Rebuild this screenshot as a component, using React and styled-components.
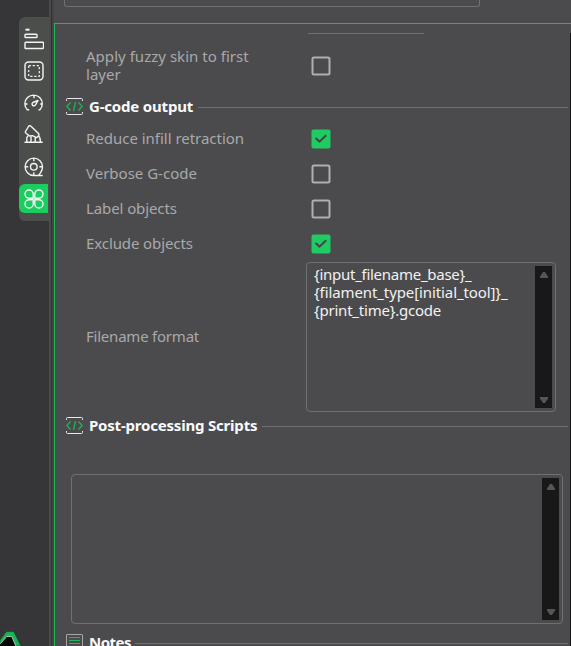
import styled, { createGlobalStyle } from "styled-components";

const GlobalStyle = createGlobalStyle`
  * {
    box-sizing: border-box;
  }

  body {
    margin: 0;
    overflow: hidden;
    background: #4b4b4d;
    font-family: "Noto Sans", "Open Sans", sans-serif;
  }
`;

const Window = styled.div`
  display: flex;
  width: 571px;
  height: 646px;
  overflow: hidden;
  background: #4b4b4d;
`;

const Sidebar = styled.aside`
  display: flex;
  flex-direction: column;
  justify-content: space-between;
  align-items: flex-end;
  width: 49px;
  padding-top: 17px;
  background: #363638;
`;

const TabList = styled.nav`
  width: 30px;
  height: 204px;
  padding-top: 7px;
  border-radius: 6px 0 0 6px;
  background: #4b4e4b;
`;

const Tab = styled.button`
  display: flex;
  align-items: center;
  justify-content: center;
  width: 29px;
  height: ${(props) => (props.$active ? 29 : 32)}px;
  padding: ${(props) => (props.$active ? "0" : "0 0 2px")};
  border: none;
  border-radius: 6px 0 0 6px;
  background: ${(props) => (props.$active ? "#1acd5f" : "transparent")};

  svg {
    display: block;
    margin-left: 1px;
  }
`;

const Logo = styled.svg`
  display: block;
  align-self: flex-start;
`;

const Divider = styled.div`
  width: 5px;
  border-left: 2px solid #4b4b4d;
  background: linear-gradient(to right, #303032 1px, #444446 1px);
`;

const Main = styled.main`
  flex: 1;
  min-width: 0;
`;

const PresetInput = styled.div`
  width: 416px;
  height: 7px;
  margin: 0 0 16px 10px;
  border: 1px solid #707072;
  border-top: none;
  border-radius: 0 0 3px 3px;
`;

const Panel = styled.div`
  position: relative;
  height: 640px;
  padding-top: 9px;
  border-top: 1px solid #1db954;
  border-left: 1px solid #1db954;
`;

const ScrollEdge = styled.div`
  position: absolute;
  top: 9px;
  right: 0;
  bottom: 0;
  width: 1px;
  background: #141414;
`;

const FieldUnderline = styled.div`
  width: 116px;
  height: 1px;
  margin-left: 253px;
  background: #707072;
`;

const Row = styled.div`
  display: flex;
  align-items: center;
  height: ${(props) => props.$height || 34}px;
  margin-bottom: 1px;
  padding-left: 31px;
`;

const Label = styled.span`
  width: 220px;
  padding-bottom: 2px;
  color: #a9a9aa;
  font-size: 15px;
  line-height: 18px;
  letter-spacing: ${(props) => props.$spacing || 0}px;
  white-space: pre-line;
`;

const CheckSvg = styled.svg`
  display: block;
  margin-left: 5px;
`;

const SectionHeader = styled.div`
  display: flex;
  align-items: center;
  height: 17px;
  margin: ${(props) => props.$margin || "0"};
  padding: 0 3px 0 11px;
`;

const SectionTitle = styled.h2`
  margin: 0 5px 2px 6px;
  width: ${(props) => props.$width}px;
  color: #fafafa;
  font-size: 15px;
  font-weight: 700;
  line-height: 18px;
  letter-spacing: ${(props) => props.$spacing || 0}px;
  white-space: nowrap;
`;

const SectionLine = styled.div`
  flex: 1;
  height: 1px;
  margin-top: 2px;
  background: #707072;
`;

const TextBox = styled.div`
  display: flex;
  justify-content: space-between;
  width: ${(props) => props.$width}px;
  height: 150px;
  margin: ${(props) => props.$margin || "0"};
  padding: 3px;
  border: 1px solid #707072;
  border-radius: 4px;
`;

const TextContent = styled.div`
  margin-top: -1px;
  padding-left: 4px;
  color: #f2f2f2;
  font-size: 15px;
  line-height: 18px;
`;

const TextLine = styled.div`
  letter-spacing: ${(props) => props.$spacing}px;
  white-space: pre;
`;

const ScrollTrack = styled.div`
  display: flex;
  flex-direction: column;
  justify-content: space-between;
  align-items: center;
  width: 17px;
  height: 142px;
  padding: 6px 0 5px;
  background: #181818;
`;

const TextAreaRow = styled(Row)`
  margin-bottom: 5px;
`;

function Checkbox({ checked }) {
  return (
    <CheckSvg width="20" height="20" viewBox="0 0 20 20" fill="none">
      {checked ? (
        <>
          <rect x="0.5" y="0.5" width="19" height="19" rx="2" fill="#1fcb62" />
          <path d="M4.500 9 8.500 12.600 15.200 6.200" stroke="#454547" strokeWidth="2" />
        </>
      ) : (
        <rect x="1.5" y="1.5" width="17" height="17" rx="1.5" stroke="#afafb0" strokeWidth="2" />
      )}
    </CheckSvg>
  );
}

function Scrollbar() {
  return (
    <ScrollTrack>
      <svg width="8" height="6" viewBox="0 0 8 6">
        <path d="M3 0h2l3 4.5V6H0V4.5z" fill="#555556" />
      </svg>
      <svg width="8" height="6" viewBox="0 0 8 6">
        <path d="M3 6h2l3-4.5V0H0v1.5z" fill="#555556" />
      </svg>
    </ScrollTrack>
  );
}

function CodeIcon() {
  return (
    <svg width="17" height="17" viewBox="0 0 17 17" fill="none">
      <path d="M.5 3V1.5q0-1 1-1h14q1 0 1 1V3M.5 14v1.5q0 1 1 1h14q1 0 1-1V14" stroke="#e8e8e8" />
      <path d="M4.5 4.5.8 8.5l3.7 4M12.500 4.500l3.700 4-3.700 4M9.500 4l-2 9" stroke="#1db954" strokeWidth="1.2" />
    </svg>
  );
}

function NotesIcon() {
  return (
    <svg width="17" height="17" viewBox="0 0 17 17" fill="none">
      <rect x=".5" y=".5" width="16" height="16" rx=".5" stroke="#a5a5a6" />
      <path d="M3 3.500h11M3 6.500h11M3 9.500h11M3 12.500h11" stroke="#1db954" />
    </svg>
  );
}

const tabIcons = [
  {
    name: "quality",
    shape: (
      <>
        <path d="M1.500 1.700h4" strokeWidth="2" />
        <rect x="1" y="6.200" width="12" height="3.300" rx=".8" />
        <rect x="1" y="14.200" width="18.500" height="6.300" rx=".8" />
      </>
    ),
    height: 22,
  },
  {
    name: "strength",
    shape: (
      <>
        <rect x="1" y="1" width="18" height="18" rx="3.500" />
        <rect x="4.700" y="4.700" width="10.600" height="10.600" strokeDasharray="2.2 1.800" strokeWidth="1.200" />
      </>
    ),
  },
  {
    name: "speed",
    shape: (
      <>
        <path d="M5.200 16.800H3.300A8.700 8.700 0 1 1 15.900 16.800H14.500M10 2.500v2.700M1.500 11h2M18 11h-1.800" />
        <path d="M14 7.500 11.500 11.800a1.800 1.800 0 1 1-2.600-2.300z" />
      </>
    ),
  },
  {
    name: "support",
    shape: (
      <path d="M.5 17.300h18.200M1.500 6.500 4.500 1.500q.8-1.300 2.200-.5l1.600 1.500L14.500 8.600q.8.800.2 1.800l-1 1.300q-.6 1-1.800.6L8.500 10.700 5.700 11 2 8.200q-1-.8-.5-1.700M2.800 17v-4.300l1.400-2M7 17v-6M11.200 17v-4.300M14.500 10.500q2 2 2 6.500" />
    ),
  },
  {
    name: "multimaterial",
    shape: (
      <>
        <path d="M18.700 18.500H9.800A8.700 8.700 0 1 1 18.500 9.800c0 3.500-1.300 5.500-3.800 8.500" />
        <circle cx="9.800" cy="9.800" r="3.300" />
        <path d="M9.800 1v3.200M9.800 15.300v3M1.200 9.800h3M15.300 9.800h3" />
      </>
    ),
  },
  {
    name: "others",
    shape: (
      <path d="M9.200 9.200H5.100a4.100 4.100 0 1 1 4.100-4.100zM10.800 9.200V5.100a4.100 4.100 0 1 1 4.100 4.100zM9.200 10.800v4.100a4.100 4.100 0 1 1-4.100-4.100zM10.800 10.800h4.100a4.100 4.100 0 1 1-4.100 4.100z" />
    ),
    active: true,
  },
];

const options = [
  { label: "Reduce infill retraction", checked: true, spacing: -0.02 },
  { label: "Verbose G-code", checked: false, spacing: 0 },
  { label: "Label objects", checked: false, spacing: -0.1 },
  { label: "Exclude objects", checked: true, spacing: -0.1 },
];

const filenameLines = [
  { text: "{input_filename_base}_", spacing: -0.27 },
  { text: "{filament_type[initial_tool]}_", spacing: -0.1 },
  { text: "{print_time}.gcode", spacing: -0.22 },
];

function App() {
  return (
    <>
      <GlobalStyle />
      <Window>
        <Sidebar>
          <TabList>
            {tabIcons.map((tab) => (
              <Tab key={tab.name} $active={tab.active} aria-label={tab.name}>
                <svg
                  width="20"
                  height={tab.height || 20}
                  viewBox={`0 0 20 ${tab.height || 20}`}
                  fill="none"
                  stroke="#f4f4f4"
                  strokeWidth="1.4"
                  strokeLinejoin="round"
                >
                  {tab.shape}
                </svg>
              </Tab>
            ))}
          </TabList>
          <Logo width="22" height="15" viewBox="0 0 22 15">
            <path d="M0 9 6.500 .6h7.300L21 15H0z" fill="#17b555" stroke="#20382a" strokeWidth=".6" />
            <path d="M-1 14 6.800 5.500h5L16.300 16H-1z" fill="#050505" stroke="#b9cfc0" strokeWidth=".9" />
          </Logo>
        </Sidebar>
        <Divider />
        <Main>
          <PresetInput />
          <Panel>
            <ScrollEdge />
            <FieldUnderline />
            <Row $height={64}>
              <Label $spacing={0.03}>{"Apply fuzzy skin to first\nlayer"}</Label>
              <Checkbox />
            </Row>
            <SectionHeader $margin="-1px 0 7px">
              <CodeIcon />
              <SectionTitle $width={104} $spacing={-0.18}>G-code output</SectionTitle>
              <SectionLine />
            </SectionHeader>
            {options.map((option) => (
              <Row key={option.label}>
                <Label $spacing={option.spacing}>{option.label}</Label>
                <Checkbox checked={option.checked} />
              </Row>
            ))}
            <TextAreaRow $height={150}>
              <Label $spacing={-0.22}>Filename format</Label>
              <TextBox $width={250}>
                <TextContent>
                  {filenameLines.map((line) => (
                    <TextLine key={line.text} $spacing={line.spacing}>
                      {line.text}
                    </TextLine>
                  ))}
                </TextContent>
                <Scrollbar />
              </TextBox>
            </TextAreaRow>
            <SectionHeader>
              <CodeIcon />
              <SectionTitle $width={168} $spacing={-0.2}>Post-processing Scripts</SectionTitle>
              <SectionLine />
            </SectionHeader>
            <TextBox $width={492} $margin="40px 0 10px 16px">
              <TextContent />
              <Scrollbar />
            </TextBox>
            <SectionHeader>
              <NotesIcon />
              <SectionTitle $width={41} $spacing={-0.5}>Notes</SectionTitle>
              <SectionLine />
            </SectionHeader>
          </Panel>
        </Main>
      </Window>
    </>
  );
}

export default App;
